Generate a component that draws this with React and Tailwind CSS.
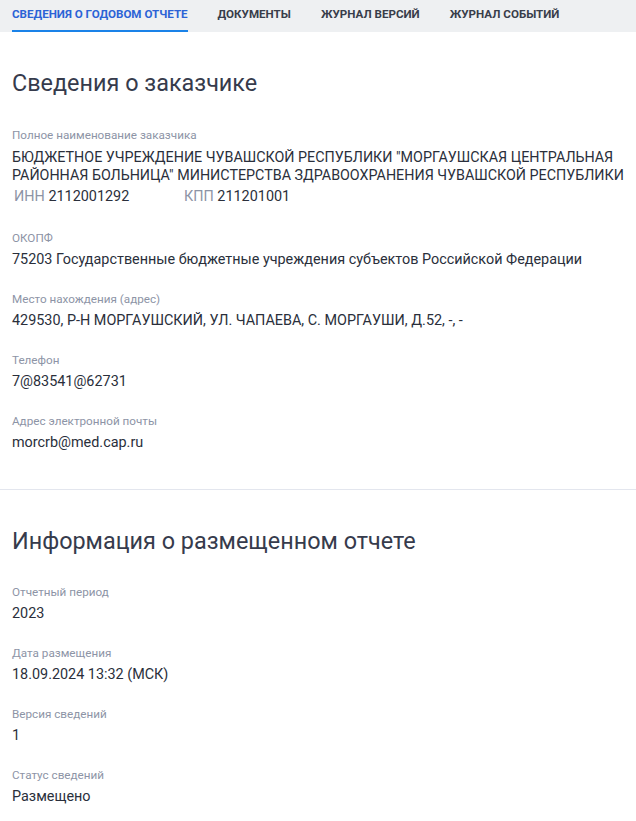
const tabs = [
  { title: 'Сведения о годовом отчете', active: true },
  { title: 'Документы' },
  { title: 'Журнал версий' },
  { title: 'Журнал событий' },
];

const customer = [
  { label: 'ОКОПФ', value: '75203 Государственные бюджетные учреждения субъектов Российской Федерации' },
  { label: 'Место нахождения (адрес)', value: '429530, Р-Н МОРГАУШСКИЙ, УЛ. ЧАПАЕВА, С. МОРГАУШИ, Д.52, -, -' },
  { label: 'Телефон', value: '7@83541@62731' },
  { label: 'Адрес электронной почты', value: 'morcrb@med.cap.ru' },
];

const report = [
  { label: 'Отчетный период', value: '2023' },
  { label: 'Дата размещения', value: '18.09.2024 13:32 (МСК)' },
  { label: 'Версия сведений', value: '1' },
  { label: 'Статус сведений', value: 'Размещено' },
];

const Field = ({ label, children }) => (
  <div>
    <div className="text-[11.7px] leading-4 text-[#8d94a6]">{label}</div>
    <div className="mt-[5px] text-[14.4px] leading-[18px] text-[#2a2f3b]">{children}</div>
  </div>
);

const App = () => {
  return (
    <div className="min-h-screen bg-white font-['Roboto',sans-serif]">
      {/* Tabs */}
      <div className="flex h-8 gap-[30px] bg-[#eef0f2] pl-3">
        {tabs.map(tab => (
          <div
            key={tab.title}
            className={`flex items-center border-b-2 text-[11.6px] font-bold uppercase ${
              tab.active ? 'border-[#1a82e8] text-[#2b63d6]' : 'border-transparent text-[#383d4a]'
            }`}
          >
            {tab.title}
          </div>
        ))}
      </div>

      {/* Customer */}
      <div className="pl-3 pr-1 pt-[35px] pb-[37px]">
        <h2 className="text-[23.4px] font-normal leading-8 text-[#363b4c]">Сведения о заказчике</h2>
        <div className="mt-7 flex flex-col gap-[22px]">
          <div>
            <div className="text-[11.7px] leading-4 text-[#8d94a6]">Полное наименование заказчика</div>
            <div className="mt-[5px] text-[14.3px] leading-[18px] text-[#2a2f3b]">
              БЮДЖЕТНОЕ УЧРЕЖДЕНИЕ ЧУВАШСКОЙ РЕСПУБЛИКИ "МОРГАУШСКАЯ ЦЕНТРАЛЬНАЯ РАЙОННАЯ БОЛЬНИЦА" МИНИСТЕРСТВА ЗДРАВООХРАНЕНИЯ ЧУВАШСКОЙ РЕСПУБЛИКИ
            </div>
            <div className="mt-1 mb-[2px] flex text-[14.4px] leading-[18px] text-[#2a2f3b]">
              <div className="w-[172px] pl-[2px]">
                <span className="text-[#8d94a6]">ИНН</span> 2112001292
              </div>
              <div>
                <span className="text-[#8d94a6]">КПП</span> 211201001
              </div>
            </div>
          </div>
          {customer.map(item => (
            <Field key={item.label} label={item.label}>{item.value}</Field>
          ))}
        </div>
      </div>

      <div className="border-t border-[#e3e6ee]" />

      {/* Report */}
      <div className="px-3 pt-[35px] pb-4">
        <h2 className="text-[23.4px] font-normal leading-8 text-[#363b4c]">Информация о размещенном отчете</h2>
        <div className="mt-[27px] flex flex-col gap-[22px]">
          {report.map(item => (
            <Field key={item.label} label={item.label}>{item.value}</Field>
          ))}
        </div>
      </div>
    </div>
  );
};

export default App;
